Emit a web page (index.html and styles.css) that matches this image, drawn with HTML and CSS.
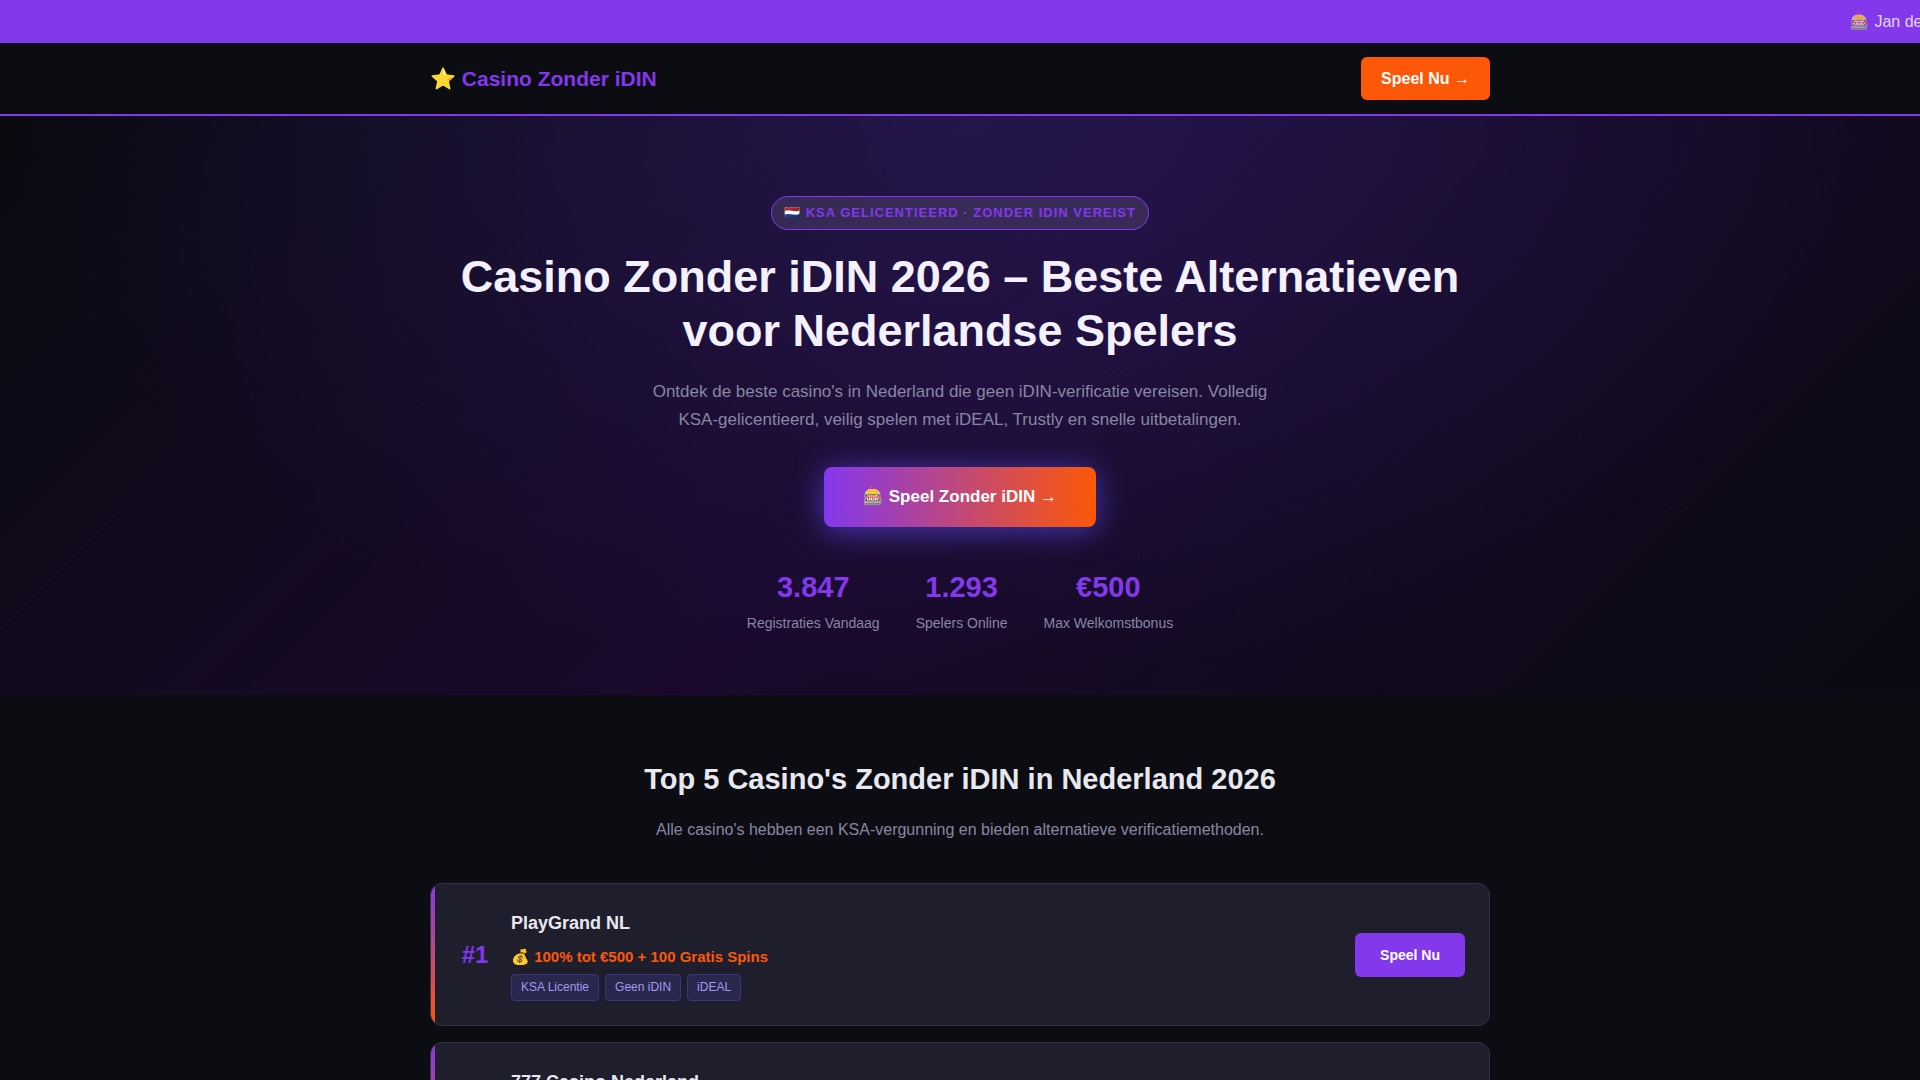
FILE: index.html
```html
<!DOCTYPE html>
<html lang="nl">
<head>
<meta charset="utf-8">
<meta name="viewport" content="width=device-width, initial-scale=1">
<title>Casino Zonder iDIN</title>
<link rel="stylesheet" href="styles.css">
</head>
<body>
<div class="ticker"><span class="ticker-text">🎰 Jan de Vries</span></div>
<header class="site-header">
  <div class="container header-row">
    <a class="logo" href="#">⭐ Casino Zonder iDIN</a>
    <a class="header-cta" href="#top5">Speel Nu →</a>
  </div>
</header>
<main>
  <section class="hero">
    <div class="container hero-content">
      <span class="badge">🇳🇱 KSA Gelicentieerd · Zonder iDIN Vereist</span>
      <h1>Casino Zonder iDIN 2026 – Beste Alternatieven voor Nederlandse Spelers</h1>
      <p class="lead">Ontdek de beste casino's in Nederland die geen iDIN-verificatie vereisen. Volledig KSA-gelicentieerd, veilig spelen met iDEAL, Trustly en snelle uitbetalingen.</p>
      <a class="hero-cta" href="#top5">🎰 Speel Zonder iDIN →</a>
      <div class="stats">
        <div class="stat"><span class="stat-value">3.847</span><span class="stat-label">Registraties Vandaag</span></div>
        <div class="stat"><span class="stat-value">1.293</span><span class="stat-label">Spelers Online</span></div>
        <div class="stat"><span class="stat-value">€500</span><span class="stat-label">Max Welkomstbonus</span></div>
      </div>
    </div>
  </section>
  <section class="top-list" id="top5">
    <div class="container">
      <h2>Top 5 Casino's Zonder iDIN in Nederland 2026</h2>
      <p class="section-sub">Alle casino's hebben een KSA-vergunning en bieden alternatieve verificatiemethoden.</p>
      <div class="cards">
        <article class="card">
          <div class="rank">#1</div>
          <div class="info">
            <h3>PlayGrand NL</h3>
            <p class="bonus">💰 100% tot €500 + 100 Gratis Spins</p>
            <div class="tags"><span class="tag">KSA Licentie</span><span class="tag">Geen iDIN</span><span class="tag">iDEAL</span></div>
          </div>
          <a class="play" href="#">Speel Nu</a>
        </article>
        <article class="card">
          <div class="rank">#2</div>
          <div class="info">
            <h3>777 Casino Nederland</h3>
            <p class="bonus">💰 100% tot €200</p>
            <div class="tags"><span class="tag">KSA Licentie</span><span class="tag">Geen iDIN</span></div>
          </div>
          <a class="play" href="#">Speel Nu</a>
        </article>
      </div>
    </div>
  </section>
</main>
</body>
</html>
```
FILE: styles.css
```css
:root {
  --bg: #0c0d12;
  --card: #1f1e2d;
  --violet: #8338ec;
  --orange: #fd5807;
  --text: #e8e8f0;
  --muted: #8886a3;
}

* { box-sizing: border-box; margin: 0; padding: 0; }

body {
  background: var(--bg);
  color: var(--text);
  font-family: "Liberation Sans", Arial, sans-serif;
  font-size: 16px;
  line-height: 27px;
  overflow-x: hidden;
}

a { text-decoration: none; }

.container {
  max-width: 1100px;
  margin: 0 auto;
  padding: 0 20px;
}

/* Ticker */
.ticker {
  background: var(--violet);
  padding: 8px 0;
  overflow: hidden;
  white-space: nowrap;
}
.ticker-text {
  display: block;
  margin-left: calc(100% - 70px);
  color: rgba(255, 255, 255, 0.8);
}

/* Header */
.site-header {
  background: var(--bg);
  border-bottom: 2px solid var(--violet);
  padding: 14px 0;
}
.header-row {
  display: flex;
  justify-content: space-between;
  align-items: center;
}
.logo {
  color: var(--violet);
  font-size: 21px;
  font-weight: 700;
}
.header-cta {
  background: var(--orange);
  color: #fff;
  font-weight: 700;
  padding: 8px 20px;
  border-radius: 6px;
}

/* Hero */
.hero {
  padding: 80px 0 60px;
  text-align: center;
  background:
    radial-gradient(ellipse at 50% 0%, rgba(66, 50, 160, 0.3) 0%, transparent 70%),
    linear-gradient(135deg, #0a0a10 0%, #1a092c 50%, #0a0a12 100%);
}
.hero-content {
  display: flex;
  flex-direction: column;
  align-items: center;
}
.badge {
  background: rgba(255, 255, 255, 0.1);
  border: 1px solid var(--violet);
  border-radius: 20px;
  color: var(--violet);
  font-size: 13px;
  font-weight: 700;
  letter-spacing: 1px;
  line-height: 22px;
  padding: 5px 12px;
  text-transform: uppercase;
  margin-bottom: 20px;
}
h1 {
  color: #f3f0ff;
  font-size: 45px;
  line-height: 54px;
  margin-bottom: 20px;
}
.lead {
  color: var(--muted);
  font-size: 17px;
  line-height: 28px;
  max-width: 620px;
  margin-bottom: 33px;
}
.hero-cta {
  background: linear-gradient(90deg, var(--violet), var(--orange));
  border-radius: 8px;
  box-shadow: 0 4px 30px rgba(84, 66, 210, 0.8);
  color: #fff;
  font-size: 17px;
  font-weight: 700;
  line-height: 28px;
  padding: 16px 39px;
  margin-bottom: 36px;
}
.stats {
  display: flex;
  flex-wrap: wrap;
  justify-content: center;
  gap: 36px;
}
.stat {
  display: flex;
  flex-direction: column;
}
.stat-value {
  color: var(--violet);
  font-size: 29px;
  font-weight: 700;
  line-height: 49px;
}
.stat-label {
  color: var(--muted);
  font-size: 14px;
  line-height: 23px;
}

/* Casino list */
.top-list { padding: 60px 0; }
h2 {
  font-size: 29px;
  line-height: 49px;
  margin-bottom: 12px;
  text-align: center;
}
.section-sub {
  color: var(--muted);
  margin-bottom: 40px;
  text-align: center;
}
.cards {
  display: flex;
  flex-direction: column;
  gap: 16px;
}
.card {
  position: relative;
  display: flex;
  align-items: center;
  gap: 16px;
  background: var(--card);
  border: 1px solid #343241;
  border-radius: 12px;
  overflow: hidden;
  padding: 24px;
}
.card::before {
  content: "";
  position: absolute;
  inset: 0 auto 0 0;
  width: 4px;
  background: linear-gradient(180deg, var(--violet), var(--orange));
}
.rank {
  color: var(--violet);
  font-size: 24px;
  font-weight: 700;
  width: 40px;
  text-align: center;
}
.info { flex: 1; }
h3 {
  font-size: 18px;
  line-height: 30px;
  margin-bottom: 6px;
}
.bonus {
  color: var(--orange);
  font-size: 15px;
  font-weight: 700;
  line-height: 26px;
  margin-bottom: 4px;
}
.tags {
  display: flex;
  flex-wrap: wrap;
  gap: 6px;
}
.tag {
  background: #29274b;
  border: 1px solid #3a3580;
  border-radius: 4px;
  color: #a599f0;
  font-size: 12px;
  line-height: 21px;
  padding: 2px 9px;
}
.play {
  background: var(--violet);
  border-radius: 6px;
  color: #fff;
  font-size: 14px;
  font-weight: 700;
  line-height: 24px;
  padding: 10px 25px;
}
```
